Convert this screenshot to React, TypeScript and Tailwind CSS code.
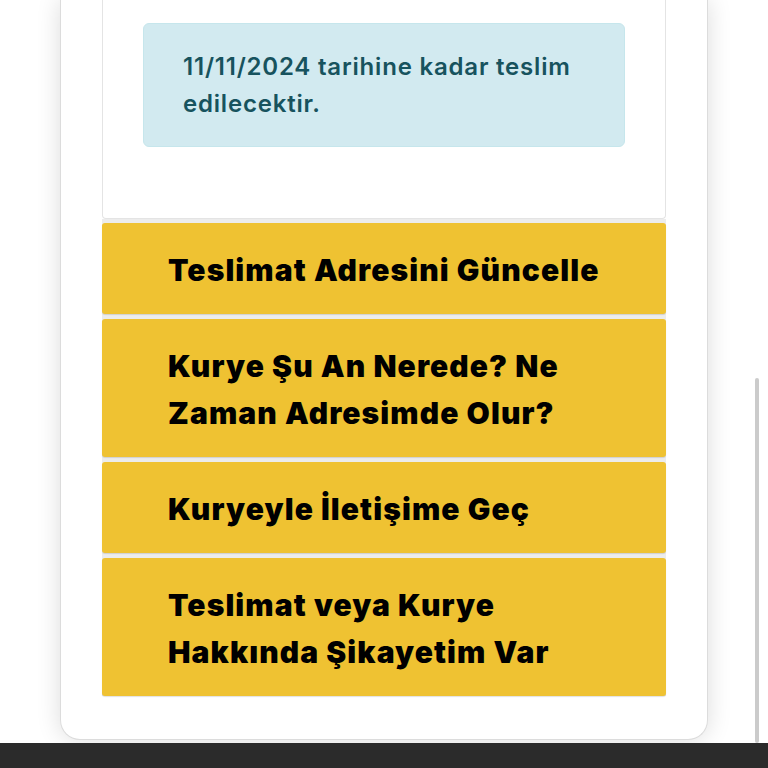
import React from 'react';

const actions = [
  'Teslimat Adresini Güncelle',
  'Kurye Şu An Nerede? Ne Zaman Adresimde Olur?',
  'Kuryeyle İletişime Geç',
  'Teslimat veya Kurye Hakkında Şikayetim Var',
];

export default function App() {
  return (
    <div className="relative flex h-[768px] flex-col overflow-hidden bg-white font-['Inter','Noto_Sans',sans-serif]">
      {/* Main Content */}
      <main className="flex-1 px-[60px]">
        <div className="w-[648px] rounded-b-[20px] border-x border-b border-[#dcdcdc] bg-white px-[41px] pb-[43px] shadow-[0_0_24px_rgba(0,0,0,0.14)]">
          {/* Delivery info */}
          <div className="rounded-b-[4px] border-x border-b border-[#e4e4e4] bg-white px-[40px] pt-[23px] pb-[71px]">
            <div className="rounded-[6px] border border-[#c6e6ec] bg-[#d2eaf0] pt-[24px] pb-[24px] pl-[39px] pr-[39px] text-[24px] font-semibold tracking-[0.8px] leading-[37px] text-[#17535e]">
              11/11/2024 tarihine kadar teslim edilecektir.
            </div>
          </div>

          {/* Action buttons */}
          <div className="flex flex-col gap-[5px] bg-[#ececec] pt-[4px]">
            {actions.map((label) => (
              <button
                key={label}
                className="rounded-[3px] bg-[#efc232] pt-[24px] pb-[20px] pr-[47px] pl-[66px] text-left text-[30px] font-black tracking-[1.1px] leading-[47px] text-black shadow-[0_1px_1px_rgba(0,0,0,0.12)]"
              >
                {label}
              </button>
            ))}
          </div>
        </div>
      </main>

      {/* Scrollbar */}
      <div className="absolute top-[378px] right-[9px] bottom-[25px] w-[4px] rounded-full bg-[#cbcbcb]" />

      {/* Bottom bar */}
      <div className="h-[25px] bg-[#2b2b2b]" />
    </div>
  );
}
